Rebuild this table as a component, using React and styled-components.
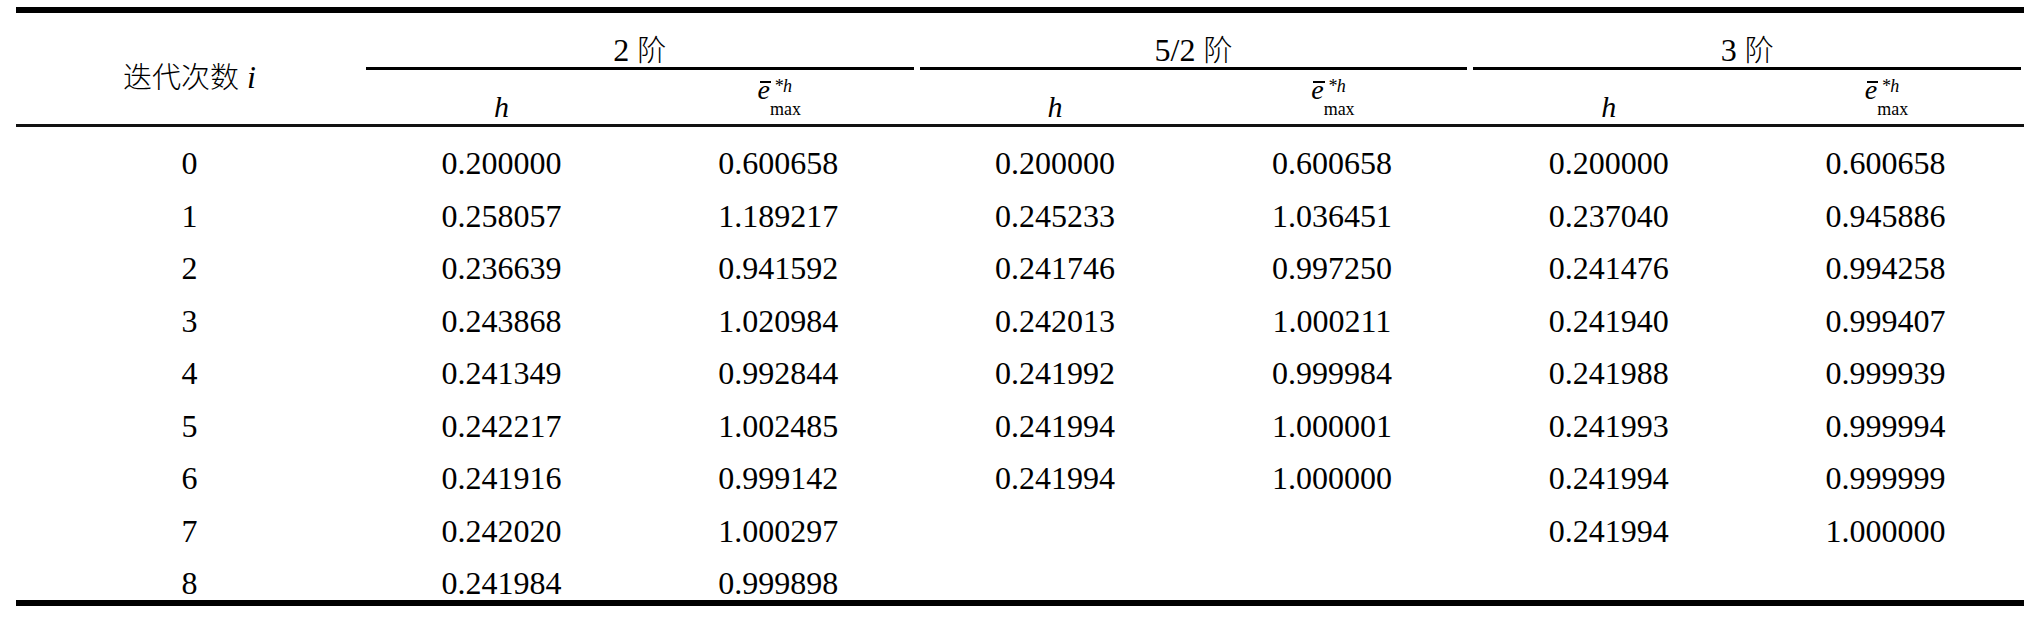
import React from 'react'
import styled, { createGlobalStyle } from 'styled-components'

const GlobalStyle = createGlobalStyle`
    body {
        margin:0;
        background:#fff;
    }
`

const serif = `"Liberation Serif", "Times New Roman", "Noto Sans CJK SC", serif`

const Page = styled.div`
    padding:7px 6px 0 16px;
`

const Table = styled.div`
    width:2008px;
    display:grid;
    grid-template-columns:347px repeat(6, 1fr);
    grid-template-rows:57px 57px;
    grid-auto-rows:52.55px;
    border-top:6px solid #000;
    border-bottom:6px solid #000;
    color:#000;
    font-family:${serif};
    font-size:32px;
    line-height:36px;
`

const CornerHead = styled.div`
    grid-row:1 / span 2;
    border-bottom:3px solid #111;
    padding-top:44px;
    text-align:center;
`

const GroupHead = styled.div`
    grid-column:span 2;
    margin:0 3px;
    border-bottom:3px solid #000;
    padding-top:17px;
    text-align:center;
`

const SubHead = styled.div`
    border-bottom:3px solid #111;
    display:flex;
    justify-content:center;
    align-items:flex-start;
`

const Han = styled.span`
    font-family:"Noto Sans CJK SC", sans-serif;
    font-weight:300;
    font-size:29px;
`

const Ital = styled.span`
    font-style:italic;
`

const HSymbol = styled.span`
    font-style:italic;
    font-size:30px;
    padding-top:19px;
`

const EMax = styled.span`
    display:inline-flex;
    align-items:flex-start;
    margin-left:2px;
`

const EBase = styled.span`
    position:relative;
    display:block;
    font-style:italic;
    font-size:28px;
    line-height:28px;
    margin-top:6px;

    &::before {
        content:'';
        position:absolute;
        left:2px;
        right:-1px;
        top:5px;
        height:2px;
        background:#000;
    }
`

const Scripts = styled.span`
    display:flex;
    flex-direction:column;
    font-size:18px;
    line-height:18px;
`

const Sup = styled.span`
    font-style:italic;
    margin-top:7px;
    margin-left:4px;
`

const Sub = styled.span`
    margin-top:5px;
`

const Cell = styled.div`
    padding-top:18px;
    text-align:center;
    white-space:nowrap;
`

const rows = [
    ['0', '0.200000', '0.600658', '0.200000', '0.600658', '0.200000', '0.600658'],
    ['1', '0.258057', '1.189217', '0.245233', '1.036451', '0.237040', '0.945886'],
    ['2', '0.236639', '0.941592', '0.241746', '0.997250', '0.241476', '0.994258'],
    ['3', '0.243868', '1.020984', '0.242013', '1.000211', '0.241940', '0.999407'],
    ['4', '0.241349', '0.992844', '0.241992', '0.999984', '0.241988', '0.999939'],
    ['5', '0.242217', '1.002485', '0.241994', '1.000001', '0.241993', '0.999994'],
    ['6', '0.241916', '0.999142', '0.241994', '1.000000', '0.241994', '0.999999'],
    ['7', '0.242020', '1.000297', '', '', '0.241994', '1.000000'],
    ['8', '0.241984', '0.999898', '', '', '', ''],
]

const groups = ['2', '5/2', '3']

const ErrorSymbol = () => (
    <EMax>
        <EBase>e</EBase>
        <Scripts>
            <Sup>*h</Sup>
            <Sub>max</Sub>
        </Scripts>
    </EMax>
)

export default function App() {
    return (
        <Page>
            <GlobalStyle />
            <Table>
                <CornerHead>
                    <Han>迭代次数</Han> <Ital>i</Ital>
                </CornerHead>
                {groups.map((g) =>
                    <GroupHead key={g}>
                        {g} <Han>阶</Han>
                    </GroupHead>
                )}
                {groups.map((g) => (
                    <React.Fragment key={g}>
                        <SubHead><HSymbol>h</HSymbol></SubHead>
                        <SubHead><ErrorSymbol /></SubHead>
                    </React.Fragment>
                ))}
                {rows.map((row, r) =>
                    row.map((value, c) =>
                        <Cell key={r + '-' + c}>{value}</Cell>
                    )
                )}
            </Table>
        </Page>
    )
}
